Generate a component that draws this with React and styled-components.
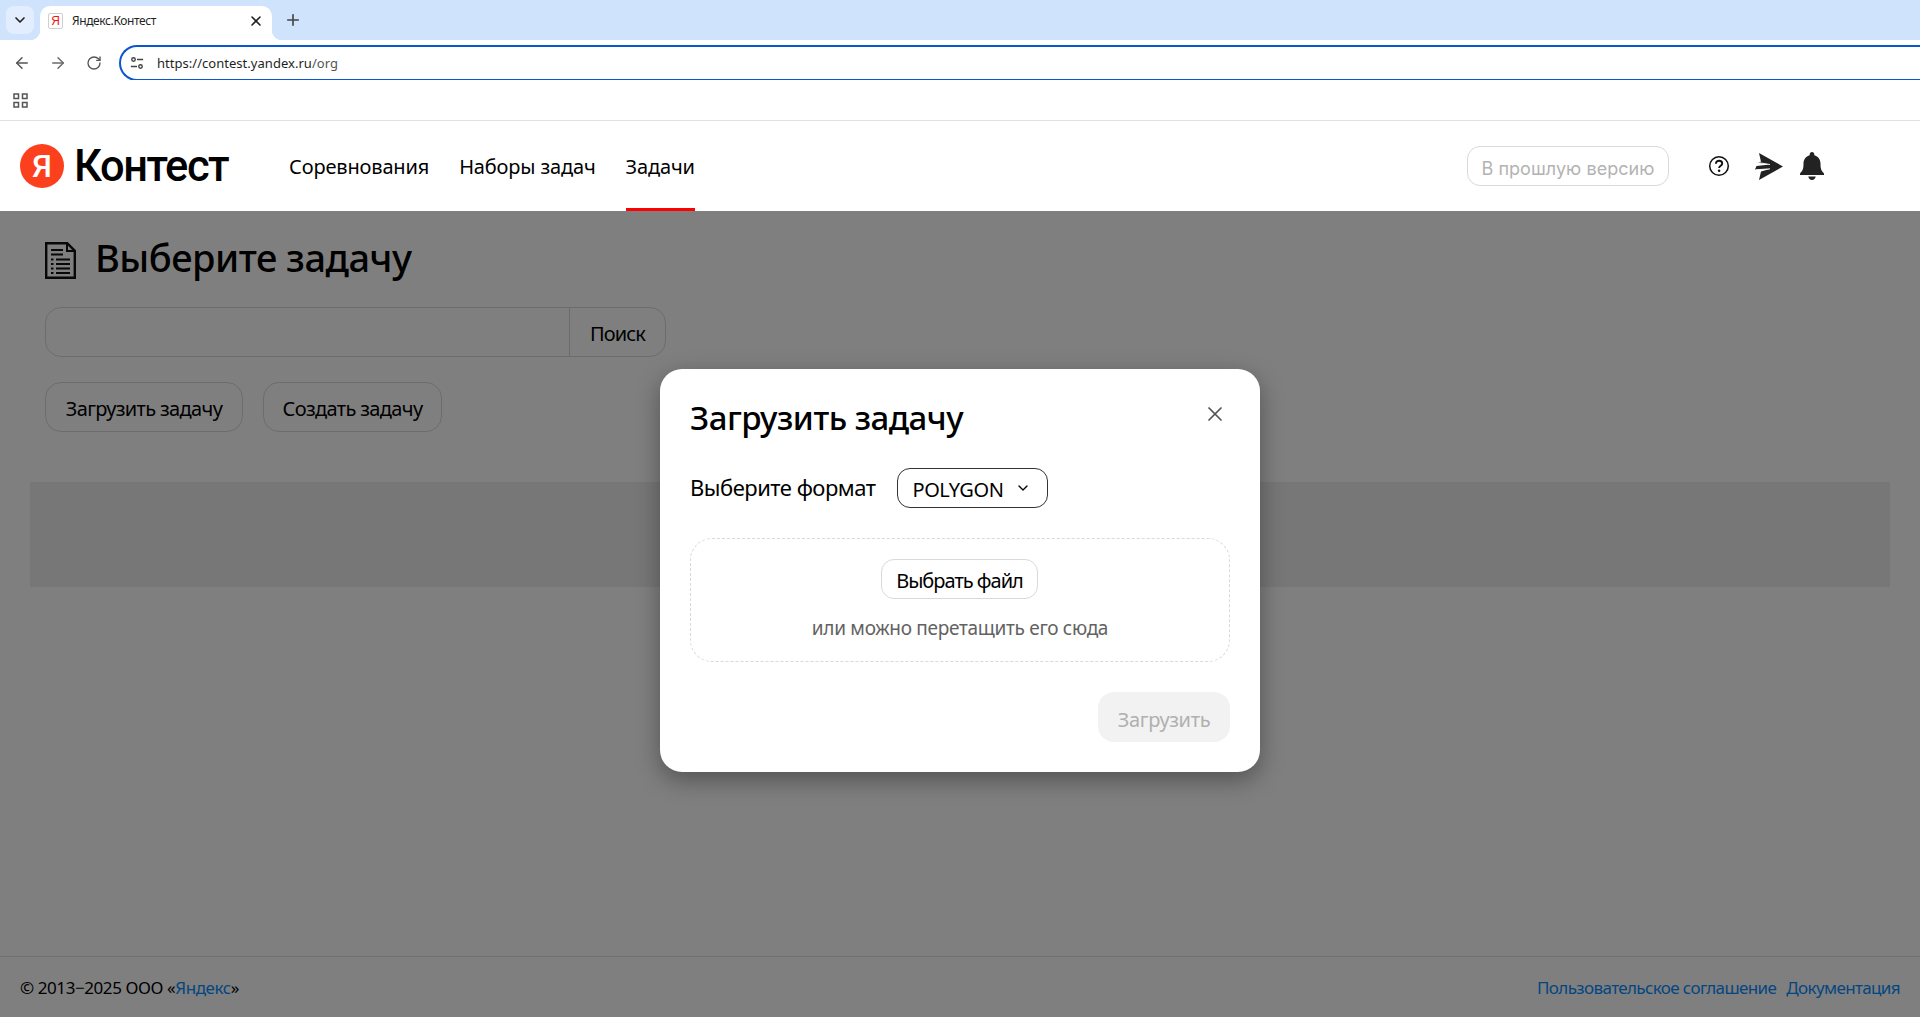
import React from "react";
import styled, { createGlobalStyle } from "styled-components";
import { ArrowLeft, ArrowRight, RotateCw, Plus, X, ChevronDown } from "lucide-react";

const Global = createGlobalStyle`
  html, body { margin: 0; padding: 0; height: 100%; background: #fff; overflow: hidden; }
  * { box-sizing: border-box; }
  body { font-family: "Noto Sans", "Open Sans", sans-serif; color: #000; }
`;

const Page = styled.div`
  position: relative;
  width: 1920px;
  height: 1017px;
  display: flex;
  flex-direction: column;
  overflow: hidden;
`;

const TabStrip = styled.div`
  height: 40px;
  background: #cfe3fd;
  display: flex;
  align-items: flex-start;
  padding: 6px 0 0 6px;
`;
const TabSearch = styled.div`
  width: 28px;
  height: 28px;
  border-radius: 8px;
  background: #e2eefe;
  display: flex;
  align-items: center;
  justify-content: center;
  margin-right: 6px;
  color: #222;
`;
const Tab = styled.div`
  position: relative;
  width: 232px;
  height: 34px;
  background: #fff;
  border-radius: 10px 10px 0 0;
  display: flex;
  align-items: center;
  padding: 0 6px 4px 8px;
  &::before, &::after {
    content: "";
    position: absolute;
    bottom: 0;
    width: 10px;
    height: 10px;
  }
  &::before { left: -10px; background: radial-gradient(circle at 0 0, transparent 10px, #fff 10.5px); }
  &::after { right: -10px; background: radial-gradient(circle at 100% 0, transparent 10px, #fff 10.5px); }
`;
const Favicon = styled.span`
  width: 15px;
  height: 16px;
  border: 1px solid #cfcfcf;
  border-radius: 2px;
  font: 400 12px/14px "Liberation Sans", sans-serif;
  color: #f01616;
  text-align: center;
  margin-right: 8px;
  flex: none;
  background: #fff;
`;
const TabTitle = styled.span`
  flex: 1;
  font: 400 12px/16px "Noto Sans", sans-serif;
  color: #1f1f1f;
  letter-spacing: -0.4px;
  margin-left: 1px;
`;
const TabClose = styled.span`
  display: flex;
  color: #222;
  margin-right: 2px;
`;
const NewTab = styled.span`
  display: flex;
  margin-left: 12px;
  margin-top: 5px;
  color: #444;
`;

const Toolbar = styled.div`
  height: 40px;
  background: #fff;
  display: flex;
  align-items: flex-start;
  padding: 5px 0 0 13px;
`;
const NavIcon = styled.span`
  width: 18px;
  height: 36px;
  margin-right: 18px;
  display: flex;
  align-items: center;
  justify-content: center;
  color: ${(p) => (p.$muted ? "#6b6b6b" : "#555")};
`;
const AddressBar = styled.div`
  flex: 1;
  margin-left: -2px;
  height: 36px;
  border: 2px solid #0b57d0;
  border-right: none;
  border-radius: 18px 0 0 18px;
  display: flex;
  align-items: center;
  padding-left: 9px;
  color: #444;
`;
const Url = styled.span`
  font: 400 13px/18px "Noto Sans", sans-serif;
  color: #1f1f1f;
  margin-left: 13px;
  letter-spacing: 0.03px;
`;
const UrlTail = styled.span`
  color: #555;
`;
const Bookmarks = styled.div`
  height: 41px;
  background: #fff;
  border-bottom: 1px solid #e1e1e1;
  display: flex;
  align-items: center;
  padding-left: 13px;
  color: #555;
`;

const Header = styled.header`
  height: 90px;
  flex: none;
  display: flex;
  align-items: center;
  padding-left: 20px;
  background: #fff;
`;
const LogoMark = styled.span`
  width: 44px;
  height: 44px;
  border-radius: 50%;
  background: #fc3f1d;
  color: #fff;
  display: flex;
  align-items: center;
  justify-content: center;
  font: 500 32px/1 "Roboto", sans-serif;
  flex: none;
`;
const LogoText = styled.span`
  display: block;
  width: 152px;
  margin-left: 10px;
  font: 500 45px/50px "Roboto", sans-serif;
  letter-spacing: -1.5px;
  transform: scaleX(0.965);
  transform-origin: left center;
  white-space: nowrap;
  color: #000;
`;
const Nav = styled.nav`
  display: flex;
  margin-left: 63px;
  gap: 30px;
  align-self: stretch;
`;
const NavLink = styled.a`
  display: flex;
  align-items: center;
  font-size: 20px;
  letter-spacing: -0.15px;
  color: #000;
  padding-top: 3px;
  border-bottom: 3px solid ${(p) => (p.$active ? "#f00" : "transparent")};
  white-space: nowrap;
`;
const HeaderRight = styled.div`
  margin-left: auto;
  margin-right: 96px;
  display: flex;
  align-items: center;
`;
const OldVersion = styled.button`
  width: 202px;
  height: 40px;
  border: 1px solid #d9d9d9;
  border-radius: 13px;
  background: #fff;
  color: #b3b3b3;
  font: 400 18px/24px "Inter", sans-serif;
  letter-spacing: 0.05px;
  padding: 5px 0 0;
  margin-right: 39px;
  white-space: nowrap;
`;
const HeaderIcons = styled.div`
  display: flex;
  align-items: center;
  gap: 17px;
  color: #222;
  svg { display: block; }
  svg:first-child { margin-right: 8px; }
`;

const Main = styled.main`
  flex: 1;
  background: #fff;
  padding: 24px 30px 0;
`;
const Actions = styled.section`
  padding-left: 15px;
`;
const TitleRow = styled.div`
  display: flex;
  align-items: center;
  height: 50px;
  gap: 19px;
`;
const PageTitle = styled.h1`
  margin: -6px 0 0;
  font: 500 38px/50px "Noto Sans", sans-serif;
  letter-spacing: -0.5px;
  color: #000;
`;
const SearchRow = styled.div`
  margin-top: 22px;
  width: 621px;
  height: 50px;
  border: 1px solid #d9d9d9;
  border-radius: 16px;
  display: flex;
`;
const SearchInput = styled.div`
  flex: 1;
`;
const SearchButton = styled.div`
  width: 96px;
  border-left: 1px solid #d9d9d9;
  display: flex;
  align-items: center;
  justify-content: center;
  font-size: 20px;
  letter-spacing: -0.9px;
  padding-top: 3px;
`;
const ButtonRow = styled.div`
  margin-top: 25px;
  display: flex;
  gap: 20px;
`;
const OutlineButton = styled.div`
  height: 50px;
  width: ${(p) => p.$w}px;
  border: 1px solid #d9d9d9;
  border-radius: 16px;
  display: flex;
  align-items: center;
  justify-content: center;
  font-size: 20px;
  letter-spacing: -0.65px;
  padding-top: 3px;
  white-space: nowrap;
`;
const Strip = styled.div`
  margin-top: 50px;
  height: 105px;
  background: #efefef;
`;

const Footer = styled.footer`
  height: 61px;
  flex: none;
  background: #fff;
  border-top: 1px solid #e1e1e1;
  display: flex;
  align-items: center;
  justify-content: space-between;
  padding: 0 20px;
  font-size: 17px;
  letter-spacing: -0.42px;
`;
const FooterLink = styled.a`
  color: #0a8cff;
`;
const FooterLinks = styled.div`
  display: flex;
  gap: 10px;
  letter-spacing: -0.62px;
`;

const Overlay = styled.div`
  position: absolute;
  top: 211px;
  left: 0;
  right: 0;
  bottom: 0;
  background: rgba(0, 0, 0, 0.5);
  display: flex;
  justify-content: center;
  align-items: flex-start;
  padding-top: 158px;
`;
const Modal = styled.div`
  width: 600px;
  height: 403px;
  background: #fff;
  border-radius: 22px;
  box-shadow: 0 8px 24px rgba(0, 0, 0, 0.35);
  padding: 28px 30px 30px;
  display: flex;
  flex-direction: column;
`;
const ModalHead = styled.div`
  display: flex;
  justify-content: space-between;
  align-items: flex-start;
`;
const ModalTitle = styled.h2`
  margin: 0;
  font: 500 33px/42px "Noto Sans", sans-serif;
  letter-spacing: -0.5px;
`;
const CloseButton = styled.span`
  display: flex;
  color: #555;
  margin: 5px 3px 0 0;
`;
const FormatRow = styled.div`
  display: flex;
  align-items: center;
  margin-top: 29px;
  gap: 22px;
`;
const FormatLabel = styled.span`
  font-size: 22px;
  letter-spacing: -0.5px;
  line-height: 32px;
  margin-top: -3px;
`;
const Select = styled.div`
  width: 151px;
  height: 40px;
  border: 1px solid #333;
  border-radius: 13px;
  display: flex;
  align-items: center;
  justify-content: space-between;
  padding: 2px 16px 0 14px;
  font-size: 20px;
  letter-spacing: -0.4px;
  svg { margin-top: -3px; }
`;
const DropZone = styled.div`
  margin-top: 30px;
  height: 124px;
  border: 1px dashed #d9d9d9;
  border-radius: 22px;
  display: flex;
  flex-direction: column;
  align-items: center;
  padding-top: 20px;
`;
const ChooseButton = styled.div`
  width: 157px;
  height: 40px;
  margin-right: 1px;
  border: 1px solid #d9d9d9;
  border-radius: 13px;
  display: flex;
  align-items: center;
  justify-content: center;
  font-size: 20px;
  letter-spacing: -1px;
  padding-top: 3px;
`;
const Hint = styled.div`
  margin-top: 15px;
  font-size: 19px;
  line-height: 28px;
  letter-spacing: -0.3px;
  color: #626262;
`;
const ModalFooter = styled.div`
  margin-top: 30px;
  display: flex;
  justify-content: flex-end;
`;
const SubmitButton = styled.div`
  width: 132px;
  height: 50px;
  border-radius: 16px;
  background: #f2f2f2;
  color: #b0b0b0;
  display: flex;
  align-items: center;
  justify-content: center;
  font-size: 20px;
  letter-spacing: -0.35px;
  padding-top: 4px;
`;

const TuneIcon = () => (
  <svg width="14" height="14" viewBox="0 0 16 16" fill="none" stroke="currentColor" strokeWidth="1.6">
    <circle cx="4" cy="4" r="2" />
    <path d="M8 4h7M1 12h7" />
    <circle cx="12" cy="12" r="2" />
  </svg>
);
const AppsIcon = () => (
  <svg width="15" height="15" viewBox="0 0 15 15" fill="none" stroke="currentColor" strokeWidth="1.5">
    <rect x="1" y="1" width="4.5" height="4.5" />
    <rect x="9.5" y="1" width="4.5" height="4.5" />
    <rect x="1" y="9.5" width="4.5" height="4.5" />
    <rect x="9.5" y="9.5" width="4.5" height="4.5" />
  </svg>
);
const HelpIcon = () => (
  <svg width="22" height="22" viewBox="0 0 22 22" fill="none">
    <circle cx="11" cy="11" r="9.3" stroke="#111" strokeWidth="1.5" />
    <path d="M7.9 8.7c0-1.9 1.4-3 3.2-3s3.1 1.1 3.1 2.7c0 2.4-3.1 2.4-3.1 4.7" stroke="#111" strokeWidth="1.9" fill="none" />
    <circle cx="11.1" cy="15.8" r="1.25" fill="#111" />
  </svg>
);
const SendIcon = () => (
  <svg width="28" height="27" viewBox="0 0 28 27" fill="#222">
    <path d="M4 0l24 13.5L4 27l2-8.5 9-2.5-15 .5L1.5 13l13.5-1.6L1 9.5l5-.8z" />
    <path d="M1 9.2l14 2.3M1 16.8l14-1" stroke="#fff" strokeWidth=".9" />
  </svg>
);
const BellIcon = () => (
  <svg width="24" height="28" viewBox="0 0 24 28" fill="#222">
    <path d="M12 0c1.4 0 2.3 1 2.3 2.3v.9c3.9 1 6.2 4.2 6.2 8.3 0 4.4.4 6.9 3.5 10V23H0v-1.5c3.1-3.1 3.5-5.6 3.5-10 0-4.1 2.3-7.3 6.2-8.3v-.9C9.7 1 10.600 0 12 0z" />
    <path d="M8.300 24.500h7.400c-.4 2-1.800 3.500-3.700 3.500s-3.300-1.500-3.700-3.500z" />
  </svg>
);
const DocIcon = () => (
  <svg width="31" height="37" viewBox="0 0 31 37" fill="none" stroke="#111">
    <path d="M1.200 1.200h21l7.600 7.600v27h-28.600z" strokeWidth="2.400" fill="none" />
    <path d="M22 1.500v7.500h7.500" strokeWidth="2" />
    <path d="M6 8h12M6 12.500h12" strokeWidth="2.200" />
    <path d="M6 17.500h2.500M11 17.500h14M6 22h2.500M11 22h14M6 26.500h2.500M11 26.500h14M6 31h2.500M11 31h14" strokeWidth="2" />
  </svg>
);

export default function App() {
  return (
    <Page>
      <Global />
      <TabStrip>
        <TabSearch><ChevronDown size={16} strokeWidth={2.5} /></TabSearch>
        <Tab>
          <Favicon>Я</Favicon>
          <TabTitle>Яндекс.Контест</TabTitle>
          <TabClose><X size={16} strokeWidth={2.4} /></TabClose>
        </Tab>
        <NewTab><Plus size={18} strokeWidth={2.2} /></NewTab>
      </TabStrip>
      <Toolbar>
        <NavIcon><ArrowLeft size={18} strokeWidth={2} /></NavIcon>
        <NavIcon $muted><ArrowRight size={18} strokeWidth={2} /></NavIcon>
        <NavIcon><RotateCw size={16} strokeWidth={2} /></NavIcon>
        <AddressBar>
          <TuneIcon />
          <Url>https://contest.yandex.ru<UrlTail>/org</UrlTail></Url>
        </AddressBar>
      </Toolbar>
      <Bookmarks><AppsIcon /></Bookmarks>
      <Header>
        <LogoMark>Я</LogoMark>
        <LogoText>Контест</LogoText>
        <Nav>
          <NavLink>Соревнования</NavLink>
          <NavLink>Наборы задач</NavLink>
          <NavLink $active>Задачи</NavLink>
        </Nav>
        <HeaderRight>
          <OldVersion>В прошлую версию</OldVersion>
          <HeaderIcons>
            <HelpIcon />
            <SendIcon />
            <BellIcon />
          </HeaderIcons>
        </HeaderRight>
      </Header>
      <Main>
        <Actions>
          <TitleRow>
            <DocIcon />
            <PageTitle>Выберите задачу</PageTitle>
          </TitleRow>
          <SearchRow>
            <SearchInput />
            <SearchButton>Поиск</SearchButton>
          </SearchRow>
          <ButtonRow>
            <OutlineButton $w={198}>Загрузить задачу</OutlineButton>
            <OutlineButton $w={179}>Создать задачу</OutlineButton>
          </ButtonRow>
        </Actions>
        <Strip />
      </Main>
      <Footer>
        <div>© 2013−2025 ООО «<FooterLink>Яндекс</FooterLink>»</div>
        <FooterLinks>
          <FooterLink>Пользовательское соглашение</FooterLink>
          <FooterLink>Документация</FooterLink>
        </FooterLinks>
      </Footer>
      <Overlay>
        <Modal>
          <ModalHead>
            <ModalTitle>Загрузить задачу</ModalTitle>
            <CloseButton><X size={24} strokeWidth={1.7} /></CloseButton>
          </ModalHead>
          <FormatRow>
            <FormatLabel>Выберите формат</FormatLabel>
            <Select>POLYGON<ChevronDown size={16} strokeWidth={2} /></Select>
          </FormatRow>
          <DropZone>
            <ChooseButton>Выбрать файл</ChooseButton>
            <Hint>или можно перетащить его сюда</Hint>
          </DropZone>
          <ModalFooter>
            <SubmitButton>Загрузить</SubmitButton>
          </ModalFooter>
        </Modal>
      </Overlay>
    </Page>
  );
}
